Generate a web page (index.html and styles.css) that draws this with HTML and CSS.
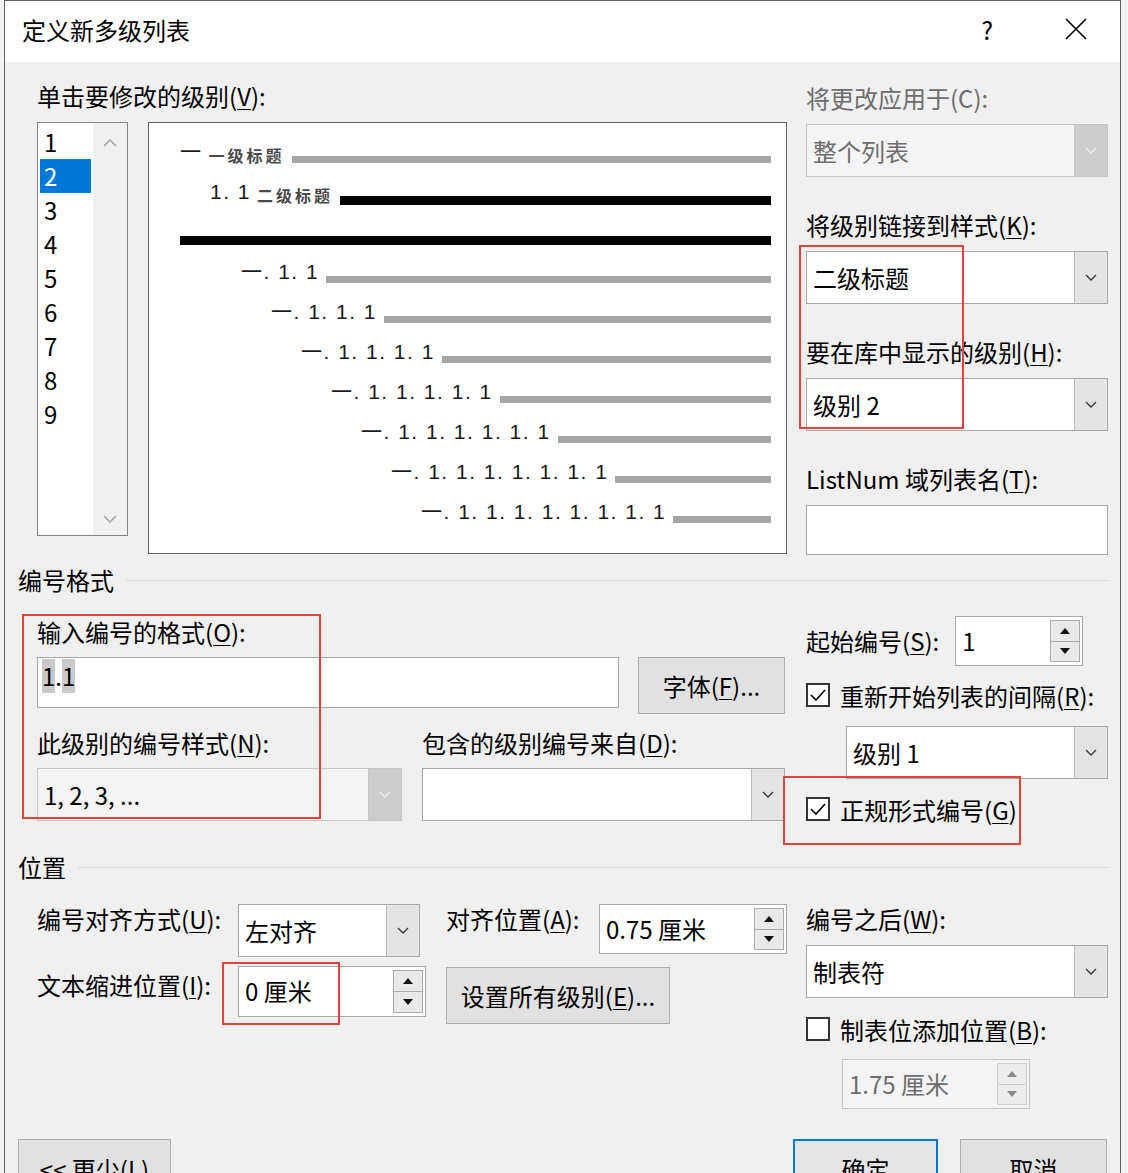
FILE: index.html
```html
<!DOCTYPE html>
<html lang="zh-CN">
<head>
    <meta charset="UTF-8">
    <meta name="viewport" content="width=device-width, initial-scale=1.0">
    <title>定义新多级列表</title>
    <link rel="stylesheet" href="styles.css">
</head>
<body>
<div class="dialog">
    <div class="titlebar">
        <span class="title">定义新多级列表</span>
        <span class="help">?</span>
        <svg class="close" width="22" height="22" viewBox="0 0 22 22"><path d="M1 1L21 21M21 1L1 21" stroke="#000" stroke-width="1.6"/></svg>
    </div>

    <div class="content">
        <!-- level picker + preview / style links -->
        <div class="top">
            <div class="levels">
                <div class="label">单击要修改的级别(<u>V</u>):</div>
                <div class="levels-row">
                    <div class="level-list">
                        <ul class="level-items">
                            <li>1</li>
                            <li class="selected">2</li>
                            <li>3</li>
                            <li>4</li>
                            <li>5</li>
                            <li>6</li>
                            <li>7</li>
                            <li>8</li>
                            <li>9</li>
                        </ul>
                        <div class="level-scroll">
                            <svg width="14" height="8" viewBox="0 0 14 8"><path d="M1 7l6-6 6 6" fill="none" stroke="#a8a8a8" stroke-width="1.6"/></svg>
                            <svg width="14" height="8" viewBox="0 0 14 8"><path d="M1 1l6 6 6-6" fill="none" stroke="#a8a8a8" stroke-width="1.6"/></svg>
                        </div>
                    </div>
                    <div class="preview">
                        <div class="pv-row"><span class="pv-num">一</span><span class="pv-head">一级标题</span><i class="bar"></i></div>
                        <div class="pv-row l2"><span class="pv-num">1. 1</span><span class="pv-head">二级标题</span><i class="bar dark"></i></div>
                        <div class="pv-row"><i class="bar dark"></i></div>
                        <div class="pv-row l3"><span class="pv-num">一. 1. 1</span><i class="bar"></i></div>
                        <div class="pv-row l4"><span class="pv-num">一. 1. 1. 1</span><i class="bar"></i></div>
                        <div class="pv-row l5"><span class="pv-num">一. 1. 1. 1. 1</span><i class="bar"></i></div>
                        <div class="pv-row l6"><span class="pv-num">一. 1. 1. 1. 1. 1</span><i class="bar"></i></div>
                        <div class="pv-row l7"><span class="pv-num">一. 1. 1. 1. 1. 1. 1</span><i class="bar"></i></div>
                        <div class="pv-row l8"><span class="pv-num">一. 1. 1. 1. 1. 1. 1. 1</span><i class="bar"></i></div>
                        <div class="pv-row l9"><span class="pv-num">一. 1. 1. 1. 1. 1. 1. 1. 1</span><i class="bar"></i></div>
                    </div>
                </div>
            </div>

            <div class="side">
                <div class="field disabled">
                    <div class="label">将更改应用于(C):</div>
                    <div class="combo"><span class="value">整个列表</span><span class="drop"><svg width="12" height="7" viewBox="0 0 12 7"><path d="M1 1l5 5 5-5" fill="none" stroke="#ececec" stroke-width="1.3"/></svg></span></div>
                </div>
                <div class="field">
                    <div class="label">将级别链接到样式(<u>K</u>):</div>
                    <div class="combo"><span class="value">二级标题</span><span class="drop"><svg width="12" height="7" viewBox="0 0 12 7"><path d="M1 1l5 5 5-5" fill="none" stroke="#333" stroke-width="1.3"/></svg></span></div>
                </div>
                <div class="field">
                    <div class="label">要在库中显示的级别(<u>H</u>):</div>
                    <div class="combo"><span class="value">级别 2</span><span class="drop"><svg width="12" height="7" viewBox="0 0 12 7"><path d="M1 1l5 5 5-5" fill="none" stroke="#333" stroke-width="1.3"/></svg></span></div>
                </div>
                <div class="field">
                    <div class="label">ListNum 域列表名(<u>T</u>):</div>
                    <div class="textbox"></div>
                </div>
            </div>
        </div>

        <div class="group-head"><span>编号格式</span><i class="rule"></i></div>

        <div class="numfmt">
            <div class="numfmt-main">
                <div class="label">输入编号的格式(<u>O</u>):</div>
                <div class="format-row">
                    <div class="textbox format-input"><span class="shade">1</span>.<span class="shade">1</span></div>
                    <button class="btn font-btn">字体(<u>F</u>)...</button>
                </div>
                <div class="style-grid">
                    <div class="label">此级别的编号样式(<u>N</u>):</div>
                    <div class="label">包含的级别编号来自(<u>D</u>):</div>
                    <div class="combo dim"><span class="value">1, 2, 3, ...</span><span class="drop"><svg width="12" height="7" viewBox="0 0 12 7"><path d="M1 1l5 5 5-5" fill="none" stroke="#ececec" stroke-width="1.3"/></svg></span></div>
                    <div class="combo"><span class="value"></span><span class="drop"><svg width="12" height="7" viewBox="0 0 12 7"><path d="M1 1l5 5 5-5" fill="none" stroke="#333" stroke-width="1.3"/></svg></span></div>
                </div>
            </div>
            <div class="numfmt-side">
                <div class="start-row">
                    <span class="label">起始编号(<u>S</u>):</span>
                    <div class="spin start-spin"><span class="value">1</span><span class="spin-btns"><span class="up"></span><span class="down"></span></span></div>
                </div>
                <div class="check-row restart-row"><span class="check"><svg width="20" height="20" viewBox="0 0 20 20"><path d="M3 10l5 5 9-10" fill="none" stroke="#000" stroke-width="1.6"/></svg></span><span>重新开始列表的间隔(<u>R</u>):</span></div>
                <div class="combo restart-combo"><span class="value">级别 1</span><span class="drop"><svg width="12" height="7" viewBox="0 0 12 7"><path d="M1 1l5 5 5-5" fill="none" stroke="#333" stroke-width="1.3"/></svg></span></div>
                <div class="check-row legal-row"><span class="check"><svg width="20" height="20" viewBox="0 0 20 20"><path d="M3 10l5 5 9-10" fill="none" stroke="#000" stroke-width="1.6"/></svg></span><span>正规形式编号(<u>G</u>)</span></div>
            </div>
        </div>

        <div class="group-head pos-head"><span>位置</span><i class="rule"></i></div>

        <div class="position">
            <div class="pos-grid">
                <div class="label">编号对齐方式(<u>U</u>):</div>
                <div class="combo align-combo"><span class="value">左对齐</span><span class="drop"><svg width="12" height="7" viewBox="0 0 12 7"><path d="M1 1l5 5 5-5" fill="none" stroke="#333" stroke-width="1.3"/></svg></span></div>
                <div class="pos-cell">
                    <span class="label">对齐位置(<u>A</u>):</span>
                    <div class="spin"><span class="value">0.75 厘米</span><span class="spin-btns"><span class="up"></span><span class="down"></span></span></div>
                </div>
                <div class="label indent-label">文本缩进位置(<u>I</u>):</div>
                <div class="spin indent-spin"><span class="value">0 厘米</span><span class="spin-btns"><span class="up"></span><span class="down"></span></span></div>
                <div class="pos-cell">
                    <button class="btn all-btn">设置所有级别(<u>E</u>)...</button>
                </div>
            </div>
            <div class="pos-side">
                <div class="label">编号之后(<u>W</u>):</div>
                <div class="combo after-combo"><span class="value">制表符</span><span class="drop"><svg width="12" height="7" viewBox="0 0 12 7"><path d="M1 1l5 5 5-5" fill="none" stroke="#333" stroke-width="1.3"/></svg></span></div>
                <div class="check-row tab-row"><span class="check"></span><span>制表位添加位置(<u>B</u>):</span></div>
                <div class="spin off tab-spin"><span class="value">1.75 厘米</span><span class="spin-btns"><span class="up"></span><span class="down"></span></span></div>
            </div>
        </div>

        <div class="footer">
            <button class="btn less-btn">&lt;&lt; 更少(<u>L</u>)</button>
            <div class="footer-right">
                <button class="btn ok-btn">确定</button>
                <button class="btn">取消</button>
            </div>
        </div>
    </div>

    <!-- red annotation boxes drawn over the dialog -->
    <div class="mark mark-style"></div>
    <div class="mark mark-format"></div>
    <div class="mark mark-legal"></div>
    <div class="mark mark-indent"></div>
</div>
</body>
</html>
```

FILE: styles.css
```css
* {
    box-sizing: border-box;
}

body {
    margin: 0;
    background-color: #f3f3f3;
    font-family: "Noto Sans CJK SC", "Noto Sans", sans-serif;
    font-size: 24px;
    color: #000;
}

u {
    text-decoration-thickness: 1px;
    text-underline-offset: 3px;
}

.dialog {
    position: relative;
    margin-left: 4px;
    width: 1117px;
    height: 1173px;
    overflow: hidden;
    background-color: #f0f0f0;
    border: 1px solid #5f5f5f;
    border-bottom: none;
}

.titlebar {
    height: 61px;
    background-color: #fff;
    display: flex;
    align-items: center;
    padding: 0 0 5px 17px;
}

.title {
    flex: 1;
    font-size: 24px;
}

.help {
    font-size: 25px;
    margin-right: 72px;
}

.close {
    margin-right: 33px;
}

.content {
    padding: 0 12px 0 32px;
}

.label {
    display: block;
    line-height: 30px;
    height: 30px;
    white-space: nowrap;
}

/* top block */
.top {
    display: grid;
    grid-template-columns: 750px 302px;
    column-gap: 19px;
    padding-top: 19px;
}

.levels-row {
    display: flex;
    align-items: flex-start;
    margin-top: 11px;
}

.level-list {
    width: 91px;
    height: 414px;
    border: 1px solid #848484;
    background-color: #fff;
    display: flex;
}

.level-items {
    list-style: none;
    margin: 0;
    padding: 2px 0 0 2px;
    width: 55px;
}

.level-items li {
    width: 51px;
    height: 34px;
    line-height: 34px;
    padding-left: 4px;
}

.level-items li.selected {
    background-color: #0078d7;
    color: #fff;
}

.level-scroll {
    flex: 1;
    background-color: #f0f0f0;
    display: flex;
    flex-direction: column;
    justify-content: space-between;
    align-items: center;
    padding: 16px 0 12px;
}

.preview {
    width: 639px;
    height: 432px;
    margin-left: 20px;
    border: 1px solid #646464;
    background-color: #fff;
    padding: 7px 15px 0 31px;
}

.pv-row {
    display: flex;
    align-items: flex-start;
    height: 40px;
}

.pv-row.l2 { padding-left: 30px; }
.pv-row.l3 { padding-left: 61px; }
.pv-row.l4 { padding-left: 91px; }
.pv-row.l5 { padding-left: 121px; }
.pv-row.l6 { padding-left: 151px; }
.pv-row.l7 { padding-left: 181px; }
.pv-row.l8 { padding-left: 211px; }
.pv-row.l9 { padding-left: 241px; }

.pv-num {
    font-family: "Liberation Sans", "Noto Sans CJK SC", sans-serif;
    font-size: 21px;
    line-height: 24px;
    margin-top: 10px;
    letter-spacing: 1.5px;
    white-space: pre;
    color: #1a1a1a;
}

.pv-head {
    font-size: 16px;
    font-weight: bold;
    line-height: 24px;
    margin-top: 13px;
    margin-left: 6px;
    letter-spacing: 3px;
    white-space: nowrap;
    color: #4a4a4a;
}

.bar {
    flex: 1;
    height: 7px;
    margin-top: 26px;
    margin-left: 7px;
    background-color: #a6a6a6;
}

.bar.dark {
    height: 9px;
    background-color: #000;
}

.bar:first-child {
    margin-left: 0;
}

/* right column fields */
.side {
    padding-top: 2px;
}

.field + .field {
    margin-top: 33px;
}

.field .label {
    margin-bottom: 11px;
}

.field.disabled .label,
.field.disabled .value {
    color: #6d6d6d;
}

.combo {
    display: flex;
    height: 53px;
    border: 1px solid #a8a8a8;
    background-color: #fff;
}

.combo .value {
    flex: 1;
    padding-left: 6px;
    line-height: 51px;
    white-space: nowrap;
}

.combo .drop {
    width: 33px;
    background-color: #e4e4e4;
    border-left: 1px solid #b9b9b9;
    display: flex;
    align-items: center;
    justify-content: center;
}

.field.disabled .combo,
.combo.dim {
    background-color: #f4f4f4;
    border-color: #c6c6c6;
}

.field.disabled .drop,
.combo.dim .drop {
    background-color: #cdcdcd;
    border-left-color: #c6c6c6;
}

.textbox {
    height: 50px;
    border: 1px solid #a8a8a8;
    background-color: #fff;
}

/* group headings */
.group-head {
    display: flex;
    align-items: center;
    height: 30px;
    margin: 10px 0 0 -19px;
}

.group-head span {
    line-height: 30px;
}

.rule {
    flex: 1;
    height: 1px;
    margin-left: 12px;
    background-color: #dadada;
}

.pos-head {
    margin-top: 28px;
}

/* numbering format */
.numfmt {
    display: grid;
    grid-template-columns: 750px 302px;
    column-gap: 19px;
    margin-top: 22px;
}

.format-row {
    display: flex;
    align-items: flex-start;
    margin-top: 10px;
    height: 57px;
}

.format-input {
    width: 582px;
    height: 51px;
    padding: 1px 0 0 4px;
    line-height: 34px;
}

.shade {
    display: inline-block;
    background-color: #c9c9c9;
}

.btn {
    font-family: "Noto Sans CJK SC", "Noto Sans", sans-serif;
    font-size: 24px;
    color: #000;
    background-color: #e1e1e1;
    border: 1px solid #adadad;
    padding: 0;
    height: 57px;
}

.font-btn {
    width: 147px;
    margin-left: 19px;
}

.style-grid {
    display: grid;
    grid-template-columns: 365px 363px;
    column-gap: 20px;
    row-gap: 10px;
    margin-top: 14px;
}

.start-row {
    display: flex;
    align-items: center;
    height: 50px;
    margin-top: -1px;
}

.spin {
    display: flex;
    width: 188px;
    height: 50px;
    border: 1px solid #a8a8a8;
    background-color: #fff;
}

.spin .value {
    flex: 1;
    padding-left: 6px;
    line-height: 48px;
    white-space: nowrap;
}

.spin-btns {
    width: 30px;
    margin: 3px 2px 3px 0;
    display: flex;
    flex-direction: column;
}

.spin-btns span {
    flex: 1;
    background-color: #e9e9e9;
    border: 1px solid #adadad;
    display: flex;
    align-items: center;
    justify-content: center;
}

.spin-btns span + span {
    border-top: none;
}

.spin-btns .up::after,
.spin-btns .down::after {
    content: "";
    border-left: 5px solid transparent;
    border-right: 5px solid transparent;
}

.spin-btns .up::after {
    border-bottom: 6px solid #111;
}

.spin-btns .down::after {
    border-top: 6px solid #111;
}

.start-spin {
    width: 128px;
    margin-left: 16px;
}

.check-row {
    display: flex;
    align-items: center;
    height: 30px;
    white-space: nowrap;
}

.check {
    width: 24px;
    height: 24px;
    border: 2px solid #333;
    background-color: #fff;
    margin-right: 10px;
    display: flex;
    align-items: center;
    justify-content: center;
}

.restart-row {
    margin-top: 14px;
}

.restart-combo {
    margin: 16px 0 0 40px;
}

.legal-row {
    margin-top: 15px;
}

/* position */
.position {
    display: grid;
    grid-template-columns: 750px 302px;
    column-gap: 19px;
    margin-top: 22px;
}

.pos-grid {
    display: grid;
    grid-template-columns: 201px 208px 1fr;
    grid-template-rows: 53px 58px;
    row-gap: 9px;
}

.align-combo {
    width: 182px;
}

.pos-cell {
    display: flex;
    justify-content: space-between;
    align-items: flex-start;
}

.indent-label {
    padding-top: 4px;
    height: auto;
}

.indent-spin {
    height: 51px;
}

.all-btn {
    width: 224px;
    margin-top: 1px;
}

.after-combo {
    margin-top: 11px;
}

.tab-row {
    margin-top: 16px;
}

.tab-spin {
    margin: 15px 0 0 36px;
}

.spin.off {
    background-color: #f4f4f4;
    border-color: #c6c6c6;
}

.spin.off .value {
    color: #6d6d6d;
}

.spin.off .spin-btns span {
    background-color: #ededed;
    border-color: #cfcfcf;
}

.spin.off .up::after {
    border-bottom-color: #8a8a8a;
}

.spin.off .down::after {
    border-top-color: #8a8a8a;
}

/* footer */
.footer {
    display: flex;
    justify-content: space-between;
    margin: 30px 0 0 -19px;
}

.less-btn {
    width: 153px;
    height: 58px;
}

.footer-right {
    display: flex;
    gap: 22px;
    margin-right: 1px;
}

.footer-right .btn {
    width: 147px;
    height: 58px;
}

.footer-right .ok-btn {
    width: 145px;
    border: 2px solid #0078d7;
    background-color: #e5e5e5;
}

/* red annotation boxes */
.mark {
    position: absolute;
    border: 2px solid #e2433f;
    pointer-events: none;
}

.mark-style {
    left: 794px;
    top: 244px;
    width: 165px;
    height: 184px;
}

.mark-format {
    left: 17px;
    top: 613px;
    width: 299px;
    height: 205px;
}

.mark-legal {
    left: 778px;
    top: 775px;
    width: 238px;
    height: 69px;
}

.mark-indent {
    left: 217px;
    top: 961px;
    width: 118px;
    height: 63px;
}
```
